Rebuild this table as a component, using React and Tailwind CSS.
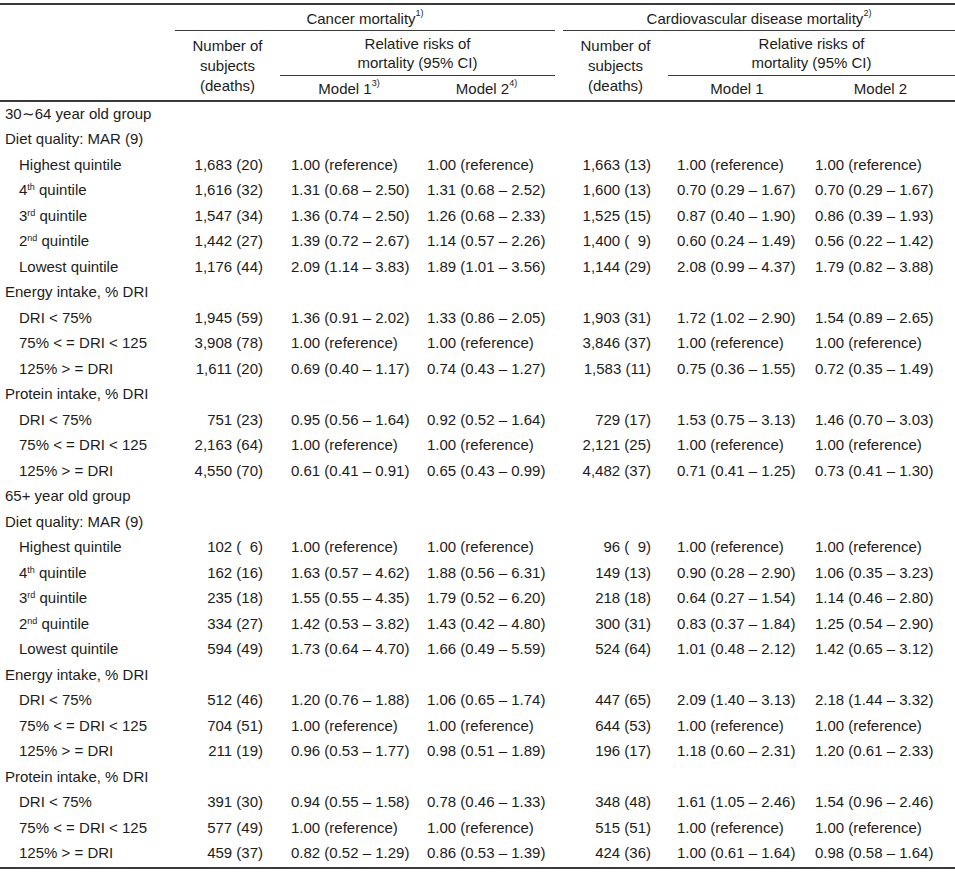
import React from "react";

const REF = "1.00 (reference)";
const cols = "grid grid-cols-[175px_105px_138px_137px_8px_105px_138px_149px]";

const quintiles = [
  ["Highest quintile"],
  ["4", "th"],
  ["3", "rd"],
  ["2", "nd"],
  ["Lowest quintile"],
];

const dri = ["DRI < 75%", "75% < = DRI < 125", "125% > = DRI"];

const groups = [
  {
    title: "30\u223C64 year old group",
    diet: [
      ["1,683 (20)", REF, REF, "1,663 (13)", REF, REF],
      ["1,616 (32)", "1.31 (0.68 – 2.50)", "1.31 (0.68 – 2.52)", "1,600 (13)", "0.70 (0.29 – 1.67)", "0.70 (0.29 – 1.67)"],
      ["1,547 (34)", "1.36 (0.74 – 2.50)", "1.26 (0.68 – 2.33)", "1,525 (15)", "0.87 (0.40 – 1.90)", "0.86 (0.39 – 1.93)"],
      ["1,442 (27)", "1.39 (0.72 – 2.67)", "1.14 (0.57 – 2.26)", "1,400 (  9)", "0.60 (0.24 – 1.49)", "0.56 (0.22 – 1.42)"],
      ["1,176 (44)", "2.09 (1.14 – 3.83)", "1.89 (1.01 – 3.56)", "1,144 (29)", "2.08 (0.99 – 4.37)", "1.79 (0.82 – 3.88)"],
    ],
    energy: [
      ["1,945 (59)", "1.36 (0.91 – 2.02)", "1.33 (0.86 – 2.05)", "1,903 (31)", "1.72 (1.02 – 2.90)", "1.54 (0.89 – 2.65)"],
      ["3,908 (78)", REF, REF, "3,846 (37)", REF, REF],
      ["1,611 (20)", "0.69 (0.40 – 1.17)", "0.74 (0.43 – 1.27)", "1,583 (11)", "0.75 (0.36 – 1.55)", "0.72 (0.35 – 1.49)"],
    ],
    protein: [
      ["751 (23)", "0.95 (0.56 – 1.64)", "0.92 (0.52 – 1.64)", "729 (17)", "1.53 (0.75 – 3.13)", "1.46 (0.70 – 3.03)"],
      ["2,163 (64)", REF, REF, "2,121 (25)", REF, REF],
      ["4,550 (70)", "0.61 (0.41 – 0.91)", "0.65 (0.43 – 0.99)", "4,482 (37)", "0.71 (0.41 – 1.25)", "0.73 (0.41 – 1.30)"],
    ],
  },
  {
    title: "65+ year old group",
    diet: [
      ["102 (  6)", REF, REF, "96 (  9)", REF, REF],
      ["162 (16)", "1.63 (0.57 – 4.62)", "1.88 (0.56 – 6.31)", "149 (13)", "0.90 (0.28 – 2.90)", "1.06 (0.35 – 3.23)"],
      ["235 (18)", "1.55 (0.55 – 4.35)", "1.79 (0.52 – 6.20)", "218 (18)", "0.64 (0.27 – 1.54)", "1.14 (0.46 – 2.80)"],
      ["334 (27)", "1.42 (0.53 – 3.82)", "1.43 (0.42 – 4.80)", "300 (31)", "0.83 (0.37 – 1.84)", "1.25 (0.54 – 2.90)"],
      ["594 (49)", "1.73 (0.64 – 4.70)", "1.66 (0.49 – 5.59)", "524 (64)", "1.01 (0.48 – 2.12)", "1.42 (0.65 – 3.12)"],
    ],
    energy: [
      ["512 (46)", "1.20 (0.76 – 1.88)", "1.06 (0.65 – 1.74)", "447 (65)", "2.09 (1.40 – 3.13)", "2.18 (1.44 – 3.32)"],
      ["704 (51)", REF, REF, "644 (53)", REF, REF],
      ["211 (19)", "0.96 (0.53 – 1.77)", "0.98 (0.51 – 1.89)", "196 (17)", "1.18 (0.60 – 2.31)", "1.20 (0.61 – 2.33)"],
    ],
    protein: [
      ["391 (30)", "0.94 (0.55 – 1.58)", "0.78 (0.46 – 1.33)", "348 (48)", "1.61 (1.05 – 2.46)", "1.54 (0.96 – 2.46)"],
      ["577 (49)", REF, REF, "515 (51)", REF, REF],
      ["459 (37)", "0.82 (0.52 – 1.29)", "0.86 (0.53 – 1.39)", "424 (36)", "1.00 (0.61 – 1.64)", "0.98 (0.58 – 1.64)"],
    ],
  },
];

function Sup({ children }) {
  return <sup className="text-[9px] -top-[0.55em]">{children}</sup>;
}

function Heading({ children }) {
  return (
    <div className={`${cols} h-[25.5px] items-center pb-[3px]`}>
      <div className="col-span-8 pl-[5px] whitespace-nowrap">{children}</div>
    </div>
  );
}

function DataRow({ label, v }) {
  return (
    <div className={`${cols} h-[25.5px] items-center pb-[3px] whitespace-pre`}>
      <div className="pl-[19px]">{label}</div>
      <div className="text-right pr-[17px]">{v[0]}</div>
      <div className="pl-[11px]">{v[1]}</div>
      <div className="pl-[9px]">{v[2]}</div>
      <div />
      <div className="text-right pr-[17px]">{v[3]}</div>
      <div className="pl-[9px]">{v[4]}</div>
      <div className="pl-[9px]">{v[5]}</div>
    </div>
  );
}

function quintileLabel(q) {
  if (q.length === 1) return q[0];
  return (
    <>
      {q[0]}
      <Sup>{q[1]}</Sup> quintile
    </>
  );
}

export default function App() {
  return (
    <div className="w-[955px] min-h-[873px] bg-white pt-[3px] text-[15px] leading-none text-[#1c1c1c] font-['Liberation_Sans',Arial,sans-serif]">
      {/* header */}
      <div className={`${cols} grid-rows-[26px_45px_24px] border-t-2 border-b-2 border-[#3a3a3a]`}>
        <div className="row-span-3" />
        <div className="col-span-3 col-start-2 border-b border-[#3a3a3a] flex items-center justify-center pt-[1px]">
          Cancer mortality<Sup>1)</Sup>
        </div>
        <div className="col-span-3 col-start-6 border-b border-[#3a3a3a] flex items-center justify-center pt-[1px]">
          Cardiovascular disease mortality<Sup>2)</Sup>
        </div>

        <div className="col-start-2 row-start-2 row-span-2 flex flex-col items-center justify-center leading-[20px]">
          <span>Number of</span>
          <span>subjects</span>
          <span>(deaths)</span>
        </div>
        <div className="col-start-3 col-span-2 row-start-2 border-b border-[#3a3a3a] flex flex-col items-center justify-center leading-[19px]">
          <span>Relative risks of</span>
          <span>mortality (95% CI)</span>
        </div>
        <div className="col-start-3 row-start-3 flex items-center justify-center">
          Model 1<Sup>3)</Sup>
        </div>
        <div className="col-start-4 row-start-3 flex items-center justify-center">
          Model 2<Sup>4)</Sup>
        </div>

        <div className="col-start-6 row-start-2 row-span-2 flex flex-col items-center justify-center leading-[20px]">
          <span>Number of</span>
          <span>subjects</span>
          <span>(deaths)</span>
        </div>
        <div className="col-start-7 col-span-2 row-start-2 border-b border-[#3a3a3a] flex flex-col items-center justify-center leading-[19px]">
          <span>Relative risks of</span>
          <span>mortality (95% CI)</span>
        </div>
        <div className="col-start-7 row-start-3 flex items-center justify-center">Model 1</div>
        <div className="col-start-8 row-start-3 flex items-center justify-center">Model 2</div>
      </div>

      {/* body */}
      <div className="border-b-2 border-[#3a3a3a]">
        {groups.map((g) => (
          <React.Fragment key={g.title}>
            <Heading>{g.title}</Heading>
            <Heading>Diet quality: MAR (9)</Heading>
            {g.diet.map((v, i) => (
              <DataRow key={"d" + i} label={quintileLabel(quintiles[i])} v={v} />
            ))}
            <Heading>Energy intake, % DRI</Heading>
            {g.energy.map((v, i) => (
              <DataRow key={"e" + i} label={dri[i]} v={v} />
            ))}
            <Heading>Protein intake, % DRI</Heading>
            {g.protein.map((v, i) => (
              <DataRow key={"p" + i} label={dri[i]} v={v} />
            ))}
          </React.Fragment>
        ))}
      </div>
    </div>
  );
}
